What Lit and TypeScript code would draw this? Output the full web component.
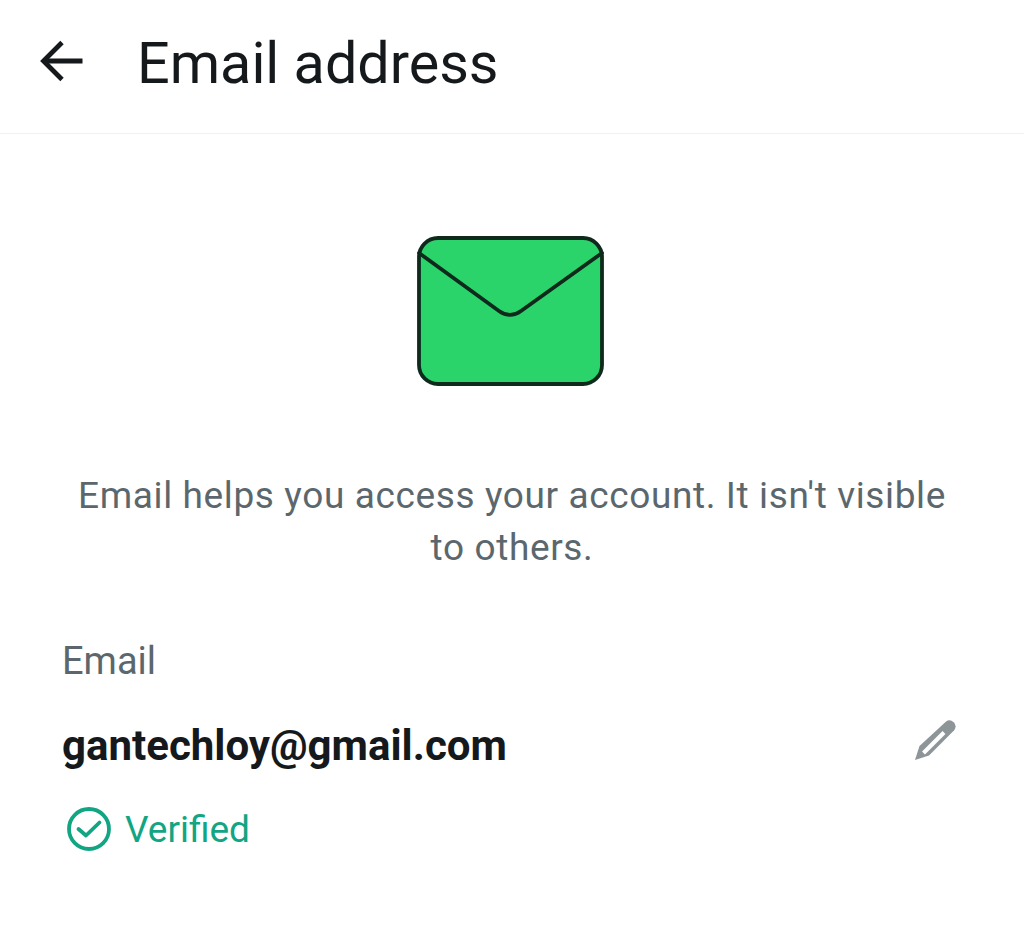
import { LitElement, html, css } from "lit";
import { customElement } from "lit/decorators.js";

@customElement("app-root")
class AppRoot extends LitElement {
  static styles = css`
    :host {
      display: block;
      height: 939px;
      background: #fff;
      font-family: Roboto, "Liberation Sans", sans-serif;
      color: #15191c;
      overflow: hidden;
    }

    .header {
      display: flex;
      align-items: center;
      height: 133px;
      padding-left: 38px;
      border-bottom: 1px solid #f0f2f2;
    }

    .back {
      width: 48px;
      height: 48px;
      margin-right: 51px;
      margin-top: -12px;
    }

    .title {
      font-size: 57.5px;
      line-height: 60px;
      font-weight: 400;
      margin: -6px 0 0;
    }

    .art {
      display: flex;
      justify-content: center;
      padding: 102px 4px 0 0;
    }

    .art svg {
      width: 188px;
      height: 150px;
    }

    .hint {
      margin: 84px 0 0;
      padding: 0 72px;
      text-align: center;
      font-size: 37px;
      line-height: 52px;
      letter-spacing: 0.62px;
      color: #5b676d;
    }

    .field {
      padding: 65px 0 0 62px;
    }

    .label {
      font-size: 38px;
      line-height: 44px;
      color: #5b676d;
    }

    .row {
      display: flex;
      align-items: flex-start;
      justify-content: space-between;
      margin-top: 38px;
      padding-right: 67px;
    }

    .value {
      font-size: 42px;
      line-height: 50px;
      font-weight: 700;
    }

    .edit {
      width: 44px;
      height: 44px;
      margin-top: -2px;
    }

    .status {
      display: flex;
      align-items: center;
      gap: 13px;
      margin: 34px 0 0 4px;
      font-size: 37px;
      line-height: 50px;
      color: #12a583;
    }

    .status svg {
      width: 46px;
      height: 46px;
      margin-top: -2px;
    }
  `;

  render() {
    return html`
      <div class="header">
        <svg class="back" viewBox="0 0 48 48" fill="none" stroke="#15191c" stroke-width="4.8" stroke-linejoin="miter">
          <path d="M44.500 24H7" />
          <path d="M24 5.500 5.500 24 24 42.500" />
        </svg>
        <h1 class="title">Email address</h1>
      </div>
      <div class="art">
        <svg viewBox="0 0 188 150" fill="none">
          <rect x="3" y="2" width="183" height="146" rx="19" fill="#2bd46a" stroke="#0f2a1c" stroke-width="3.8" />
          <path d="M3 17 83 75c7 5 15 5 22 0l81-58" stroke="#0f2a1c" stroke-width="3.8" stroke-linecap="round" />
        </svg>
      </div>
      <p class="hint">Email helps you access your account. It isn't visible to others.</p>
      <div class="field">
        <div class="label">Email</div>
        <div class="row">
          <span class="value">gantechloy@gmail.com</span>
          <svg class="edit" viewBox="0 0 44 44">
            <path d="M32.800 2.800a6 6 0 0 1 8.400 8.400L16 36.500 2 41l4.500-14z" fill="#8e9598" />
            <path d="M31 13.500 10.500 34" stroke="#fff" stroke-width="4" />
          </svg>
        </div>
        <div class="status">
          <svg viewBox="0 0 46 46" fill="none" stroke="#12a583" stroke-width="3.8" stroke-linecap="round" stroke-linejoin="round">
            <circle cx="23" cy="23" r="20" />
            <path d="M12.500 23l7.500 6.500 13.500-13" />
          </svg>
          <span>Verified</span>
        </div>
      </div>
    `;
  }
}
